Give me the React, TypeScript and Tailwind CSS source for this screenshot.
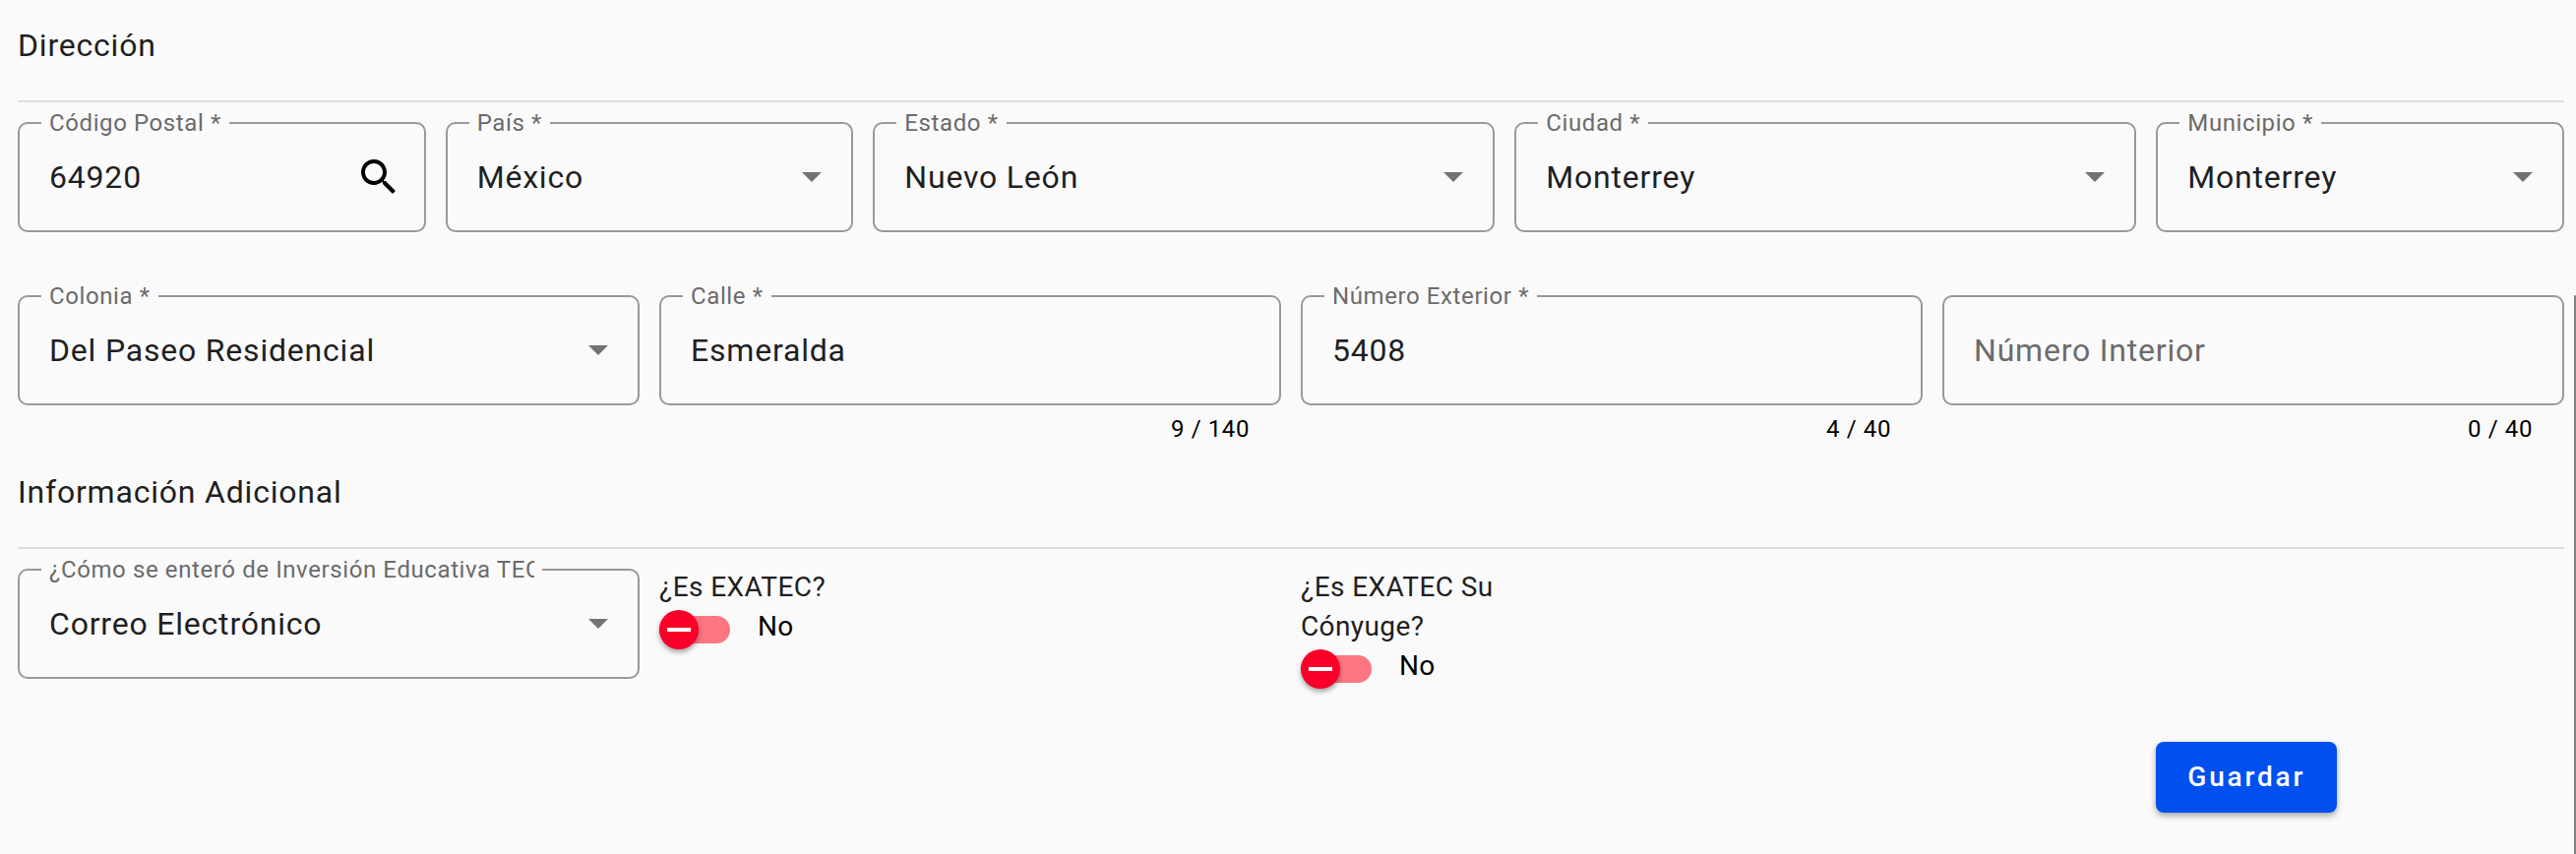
import { useState, type ReactNode } from "react";
import { clsx } from "clsx";

const GRID = "grid grid-cols-12 gap-x-5";

const CONTROL =
  "block w-full min-w-0 appearance-none bg-transparent tracking-wide text-[32px] text-[#1f1f1f] outline-none placeholder:text-[#6b6b6b] placeholder:opacity-100";

function Section({ title, children }: { title: string; children: ReactNode }) {
  return (
    <section>
      <h2 className="text-[32px] leading-10 tracking-wide text-[#1f1f1f]">{title}</h2>
      <hr className="mt-9 mb-[7px] border-t-2 border-[#dcdcdc]" />
      {children}
    </section>
  );
}

interface OutlineProps {
  id: string;
  label: string;
  children: ReactNode;
}

// The legend cuts the notch in the top border
function Outline({ id, label, children }: OutlineProps) {
  return (
    <fieldset className="min-w-0 rounded-[10px] border-2 border-[#999999] pb-[13px]">
      <legend className="ml-[22px] max-w-[81%] px-2">
        <label
          htmlFor={id}
          className="block overflow-hidden text-2xl leading-7 tracking-wide whitespace-nowrap text-[#6b6b6b]"
        >
          {label}
        </label>
      </legend>
      {children}
    </fieldset>
  );
}

interface SelectFieldProps {
  id: string;
  label: string;
  options: string[];
  className: string;
}

function SelectField({ id, label, options, className }: SelectFieldProps) {
  return (
    <div className={className}>
      <Outline id={id} label={label}>
        <div className="relative">
          <select id={id} className={clsx(CONTROL, "h-[82px] pr-16 pl-[30px]")}>
            {options.map((option) => (
              <option key={option}>{option}</option>
            ))}
          </select>
          <svg
            viewBox="0 0 20 10"
            className="pointer-events-none absolute top-9 right-[30px] h-[10px] w-5 fill-[#737373]"
            aria-hidden="true"
          >
            <path d="M0 0h20L10 10z" />
          </svg>
        </div>
      </Outline>
    </div>
  );
}

interface TextFieldProps {
  id: string;
  label: string;
  initial?: string;
  max: number;
  className: string;
}

function TextField({ id, label, initial = "", max, className }: TextFieldProps) {
  const [value, setValue] = useState(initial);

  return (
    <div className={className}>
      {value ? (
        <Outline id={id} label={label}>
          <input
            id={id}
            value={value}
            maxLength={max}
            onChange={(e) => setValue(e.target.value)}
            className={clsx(CONTROL, "h-[82px] px-[30px]")}
          />
        </Outline>
      ) : (
        <div className="mt-[13px] rounded-[10px] border-2 border-[#999999]">
          <input
            id={id}
            aria-label={label}
            placeholder={label}
            value={value}
            maxLength={max}
            onChange={(e) => setValue(e.target.value)}
            className={clsx(CONTROL, "h-[108px] px-[30px]")}
          />
        </div>
      )}
      <p className="mt-[10px] px-8 text-right text-2xl leading-7 tracking-wide text-black">
        {value.length} / {max}
      </p>
    </div>
  );
}

function PostalCodeField({ className }: { className: string }) {
  const [value, setValue] = useState("64920");

  return (
    <div className={className}>
      <Outline id="codigo-postal" label="Código Postal *">
        <div className="flex items-center pr-[22px] pl-[30px]">
          <input
            id="codigo-postal"
            value={value}
            onChange={(e) => setValue(e.target.value)}
            className={clsx(CONTROL, "h-[82px]")}
          />
          <button type="button" aria-label="Buscar" className="shrink-0">
            <svg viewBox="0 0 24 24" className="size-12 fill-black">
              <path d="M15.5 14h-.79l-.28-.27C15.41 12.59 16 11.11 16 9.5 16 5.91 13.09 3 9.5 3S3 5.91 3 9.5 5.91 16 9.5 16c1.61 0 3.09-.59 4.23-1.57l.27.28v.79l5 4.99L20.49 19l-4.99-5zm-6 0C7.01 14 5 11.99 5 9.5S7.01 5 9.5 5 14 7.01 14 9.5 11.99 14 9.5 14z" />
            </svg>
          </button>
        </div>
      </Outline>
    </div>
  );
}

function Toggle({ id, label, className }: { id: string; label: string; className: string }) {
  const [on, setOn] = useState(false);

  return (
    <div className={clsx("pt-3 text-[28px] leading-10", className)}>
      <label htmlFor={id} className="block w-1/3 text-[#1f1f1f]">
        {label}
      </label>
      <div className="flex items-start gap-7 text-black">
        <span className="relative mt-[3px] flex h-10 w-[72px] items-center">
          <input
            id={id}
            type="checkbox"
            role="switch"
            checked={on}
            onChange={(e) => setOn(e.target.checked)}
            className="h-7 w-full appearance-none rounded-full bg-[#fb7680] checked:bg-blue-300"
          />
          <span
            className={clsx(
              "pointer-events-none absolute top-0 flex size-10 items-center justify-center rounded-full shadow-[0_3px_5px_rgba(0,0,0,0.35)]",
              on ? "right-0 bg-[#0050f0]" : "left-0 bg-[#f90029]"
            )}
          >
            <span className="h-1 w-6 bg-white" />
          </span>
        </span>
        <span>{on ? "Sí" : "No"}</span>
      </div>
    </div>
  );
}

export default function App() {
  return (
    <main className="relative min-h-screen bg-[#fafafa] pt-[26px] pr-3 pb-10 pl-[18px] font-['Roboto',sans-serif] tracking-wide">
      <form onSubmit={(e) => e.preventDefault()}>
        <Section title="Dirección">
          <div className={GRID}>
            <PostalCodeField className="col-span-2" />
            <SelectField id="pais" label="País *" options={["México"]} className="col-span-2" />
            <SelectField id="estado" label="Estado *" options={["Nuevo León"]} className="col-span-3" />
            <SelectField id="ciudad" label="Ciudad *" options={["Monterrey"]} className="col-span-3" />
            <SelectField id="municipio" label="Municipio *" options={["Monterrey"]} className="col-span-2" />
          </div>
          <div className={clsx(GRID, "mt-[51px] mb-[30px]")}>
            <SelectField id="colonia" label="Colonia *" options={["Del Paseo Residencial"]} className="col-span-3" />
            <TextField id="calle" label="Calle *" initial="Esmeralda" max={140} className="col-span-3" />
            <TextField id="numero-exterior" label="Número Exterior *" initial="5408" max={40} className="col-span-3" />
            <TextField id="numero-interior" label="Número Interior" max={40} className="col-span-3" />
          </div>
        </Section>

        <Section title="Información Adicional">
          <div className={GRID}>
            <SelectField
              id="como-se-entero"
              label="¿Cómo se enteró de Inversión Educativa TEC? *"
              options={["Correo Electrónico"]}
              className="col-span-3"
            />
            <Toggle id="es-exatec" label="¿Es EXATEC?" className="col-span-3" />
            <Toggle id="es-exatec-conyuge" label="¿Es EXATEC Su Cónyuge?" className="col-span-3" />
          </div>
        </Section>

        <div className={clsx(GRID, "mt-[54px]")}>
          <div className="col-span-2 col-start-11">
            <button
              type="submit"
              className="h-[72px] rounded-lg bg-[#0050f0] px-8 text-[28px] font-medium tracking-widest text-white shadow-[0_3px_6px_rgba(0,0,0,0.35)]"
            >
              Guardar
            </button>
          </div>
        </div>
      </form>

      <div className="absolute top-[300px] right-0 bottom-0 w-[2px] rounded-t-full bg-[#808080]" />
    </main>
  );
}
